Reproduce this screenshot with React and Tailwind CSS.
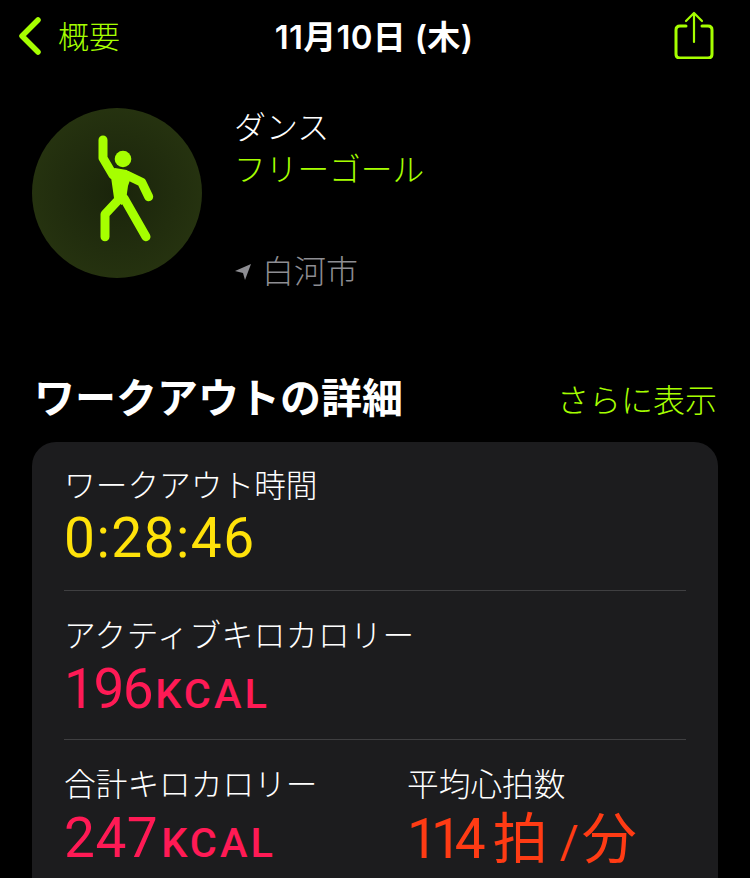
import React from "react";

const jp = "font-['Inter','Noto_Sans_CJK_JP',sans-serif]";
const num = "font-['Roboto','Noto_Sans_CJK_JP',sans-serif]";

const Chevron = () => (
  <svg width="24" height="38" viewBox="0 0 24 38" fill="none" className="mt-[-3px]">
    <path d="M20 3 L4 19 L20 35" stroke="#a6ff00" strokeWidth="5.5" strokeLinecap="round" strokeLinejoin="round" />
  </svg>
);

const Share = () => (
  <svg width="40" height="48" viewBox="0 0 40 48" fill="none" stroke="#a6ff00" strokeLinecap="round" strokeLinejoin="round" className="mt-[-5px]">
    <path d="M12 15 H6 Q2 15 2 19 V43 Q2 47 6 47 H34 Q38 47 38 43 V19 Q38 15 34 15 H28" strokeWidth="3" />
    <path d="M20 31 V2 M12 10 L20 2 L28 10" strokeWidth="2.2" />
  </svg>
);

const Dancer = () => (
  <svg width="170" height="170" viewBox="0 0 170 170" className="block">
    <circle cx="91" cy="51" r="8.3" fill="#a6ff00" />
    <path d="M78 62 L83 60 L94.7 62 L99.7 67 L96 78 L94 92 L89.7 97 L82 90 Z" fill="#a6ff00" />
    <g fill="none" stroke="#a6ff00" strokeWidth="9" strokeLinecap="round" strokeLinejoin="round">
      <path d="M71 32 V50 L81 67" />
      <path d="M94.7 67 L109.7 74.3 L116.7 88.7" />
      <path d="M86.3 92 L73 106.3 V128.7" />
      <path d="M92 90.3 L114 128.7" />
    </g>
  </svg>
);

const Stat = ({ label, labelClass = "", children }) => (
  <div>
    <div className={`text-[31.7px] font-light leading-[40px] text-white ${labelClass}`}>{label}</div>
    {children}
  </div>
);

const Kcal = ({ value, spacing }) => (
  <div className={`${num} mt-[0px] text-[55px] leading-[66px] text-[#ff1a55]`}>
    <span className={spacing}>{value}</span>
    <span className="ml-[3px] text-[41.5px] font-medium tracking-[3px]">KCAL</span>
  </div>
);

export default function App() {
  return (
    <div className={`${jp} relative h-[878px] w-[750px] overflow-hidden bg-black`}>
      <header className="flex h-[75px] items-center justify-between pl-[18px] pr-[36px]">
        <div className="flex w-[200px] items-center gap-[16px] text-[31px] font-light text-[#a6ff00]">
          <Chevron />
          <span>概要</span>
        </div>
        <div className="text-[33px] font-semibold tracking-[0.3px] text-white">11月10日 (木)</div>
        <div className="flex w-[184px] justify-end">
          <Share />
        </div>
      </header>

      <section className="mt-[33px] flex pl-[32px]">
        <div className="h-[170px] w-[170px] rounded-full bg-[radial-gradient(circle,#1a240b_0%,#2a3811_100%)]">
          <Dancer />
        </div>
        <div className="ml-[32px] flex flex-col">
          <div className="mt-[-1px] text-[32px] font-light leading-[42px] text-white">ダンス</div>
          <div className="text-[31.7px] font-light leading-[42px] text-[#a6ff00]">フリーゴール</div>
          <div className="mt-[60px] flex items-center gap-[10px] text-[32px] font-light leading-[42px] text-[#8e8e93]">
            <svg width="18" height="18" viewBox="0 0 18 18">
              <path d="M17 1 L1 8 L9 10 L11 17 Z" fill="#8e8e93" />
            </svg>
            <span>白河市</span>
          </div>
        </div>
      </section>

      <section className="mt-[75px] flex items-center justify-between pl-[34px] pr-[33px]">
        <h2 className="text-[41px] font-bold leading-[60px] text-white">ワークアウトの詳細</h2>
        <span className="mt-[6px] text-[32px] font-light text-[#a6ff00]">さらに表示</span>
      </section>

      <section className="mx-[32px] mt-[14px] rounded-[24px] bg-[#1c1c1e] pb-[30px] pl-[32px] pr-[32px] pt-[24px]">
        <div className="border-b border-[#3f3f41] pb-[19px]">
          <Stat label="ワークアウト時間">
            <div className={`${num} mt-[-1px] text-[55px] leading-[66px] tracking-[1.5px] text-[#ffe20a]`}>0:28:46</div>
          </Stat>
        </div>
        <div className="border-b border-[#3f3f41] pb-[12px] pt-[25px]">
          <Stat label="アクティブキロカロリー" labelClass="tracking-[0.5px]">
            <Kcal value="196" spacing="tracking-[-1.5px]" />
          </Stat>
        </div>
        <div className="flex pt-[25px]">
          <div className="w-[343px]">
            <Stat label="合計キロカロリー">
              <Kcal value="247" spacing="tracking-[0.5px]" />
            </Stat>
          </div>
          <Stat label="平均心拍数">
            <div className={`${num} mt-[1px] text-[55px] leading-[66px] text-[#ff3b14]`}>
              <span className="tracking-[-7px]">114</span>
              <span className="ml-[14px]">拍</span>
              <span className="ml-[12px] text-[46px]">/</span>
              <span className="ml-[3px]">分</span>
            </div>
          </Stat>
        </div>
      </section>
    </div>
  );
}
